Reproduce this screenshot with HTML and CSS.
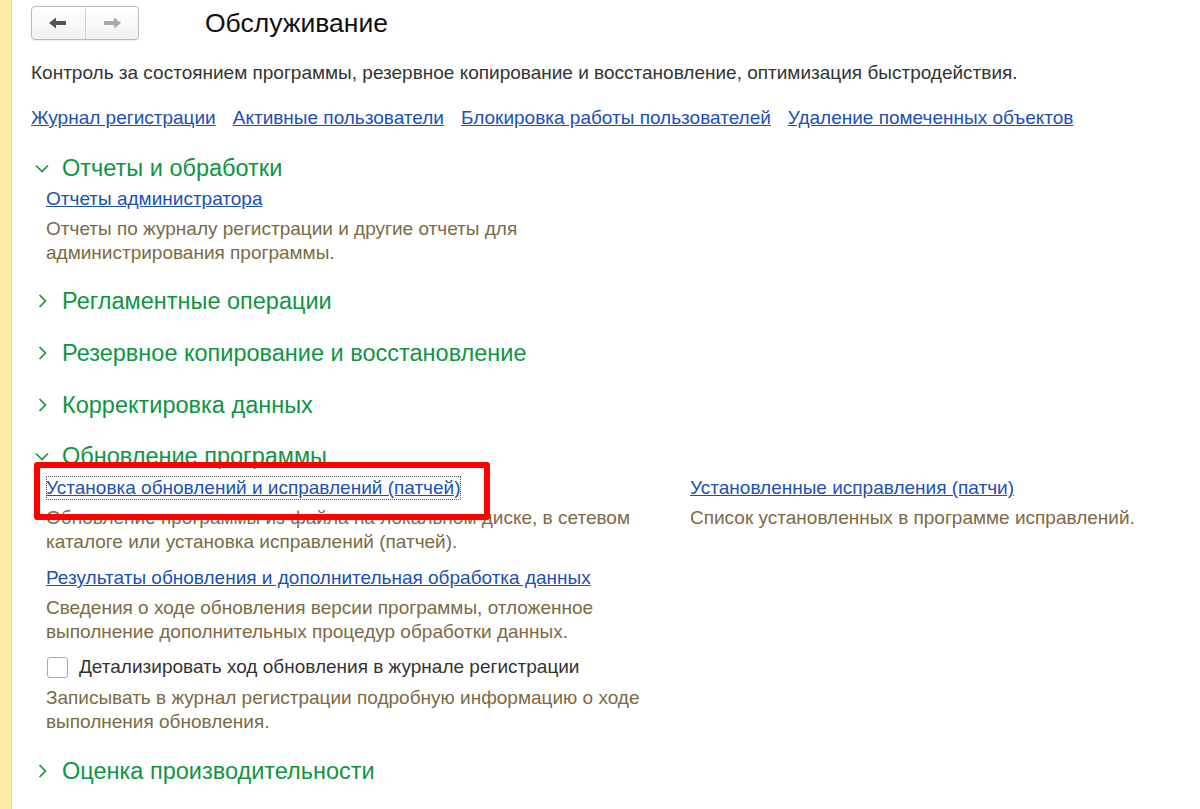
FILE: index.html
```html
<!DOCTYPE html>
<html lang="ru">
<head>
<meta charset="utf-8">
<title>Обслуживание</title>
<link rel="stylesheet" href="styles.css">
</head>
<body>
<div class="strip"></div>
<main class="page">
  <header class="topbar">
    <div class="navbtns">
      <span class="nb nb-back">
        <svg width="18" height="12" viewBox="0 0 18 12"><path d="M0 6 L7 0.5 V4 H17 V8 H7 V11.5 Z" fill="#555"/></svg>
      </span>
      <span class="nb nb-fwd">
        <svg width="18" height="12" viewBox="0 0 18 12"><path d="M18 6 L11 0.5 V4 H1 V8 H11 V11.5 Z" fill="#a9a9a9"/></svg>
      </span>
    </div>
    <h1 class="title">Обслуживание</h1>
  </header>

  <p class="lead">Контроль за состоянием программы, резервное копирование и восстановление, оптимизация быстродействия.</p>

  <nav class="toplinks">
    <a href="#">Журнал регистрации</a>
    <a href="#">Активные пользователи</a>
    <a href="#">Блокировка работы пользователей</a>
    <a href="#">Удаление помеченных объектов</a>
  </nav>

  <section class="group open first">
    <h2 class="ghead"><span class="chev down"><svg width="14" height="9" viewBox="0 0 14 9"><path d="M1 1.5 L7 7.5 L13 1.5" fill="none" stroke="#12963f" stroke-width="1.7"/></svg></span>Отчеты и обработки</h2>
    <div class="gbody">
      <div class="item">
        <a href="#" class="ilink">Отчеты администратора</a>
        <p class="idesc">Отчеты по журналу регистрации и другие отчеты для<br>администрирования программы.</p>
      </div>
    </div>
  </section>

  <section class="group after-open">
    <h2 class="ghead"><span class="chev right"><svg width="9" height="14" viewBox="0 0 9 14"><path d="M1.5 1 L7.5 7 L1.5 13" fill="none" stroke="#12963f" stroke-width="1.7"/></svg></span>Регламентные операции</h2>
  </section>

  <section class="group">
    <h2 class="ghead"><span class="chev right"><svg width="9" height="14" viewBox="0 0 9 14"><path d="M1.5 1 L7.5 7 L1.5 13" fill="none" stroke="#12963f" stroke-width="1.7"/></svg></span>Резервное копирование и восстановление</h2>
  </section>

  <section class="group">
    <h2 class="ghead"><span class="chev right"><svg width="9" height="14" viewBox="0 0 9 14"><path d="M1.5 1 L7.5 7 L1.5 13" fill="none" stroke="#12963f" stroke-width="1.7"/></svg></span>Корректировка данных</h2>
  </section>

  <section class="group open upd">
    <h2 class="ghead"><span class="chev down"><svg width="14" height="9" viewBox="0 0 14 9"><path d="M1 1.5 L7 7.5 L13 1.5" fill="none" stroke="#12963f" stroke-width="1.7"/></svg></span>Обновление программы</h2>
    <div class="gbody cols">
      <div class="col">
        <div class="item">
          <a href="#" class="ilink focused">Установка обновлений и исправлений (патчей)</a>
          <p class="idesc">Обновление программы из файла на локальном диске, в сетевом<br>каталоге или установка исправлений (патчей).</p>
        </div>
        <div class="item">
          <a href="#" class="ilink">Результаты обновления и дополнительная обработка данных</a>
          <p class="idesc">Сведения о ходе обновления версии программы, отложенное<br>выполнение дополнительных процедур обработки данных.</p>
        </div>
        <div class="item">
          <label class="check"><span class="box"></span>Детализировать ход обновления в журнале регистрации</label>
          <p class="idesc">Записывать в журнал регистрации подробную информацию о ходе<br>выполнения обновления.</p>
        </div>
      </div>
      <div class="col">
        <div class="item">
          <a href="#" class="ilink">Установленные исправления (патчи)</a>
          <p class="idesc">Список установленных в программе исправлений.</p>
        </div>
      </div>
    </div>
    <div class="redmark"></div>
  </section>

  <section class="group last">
    <h2 class="ghead"><span class="chev right"><svg width="9" height="14" viewBox="0 0 9 14"><path d="M1.5 1 L7.5 7 L1.5 13" fill="none" stroke="#12963f" stroke-width="1.7"/></svg></span>Оценка производительности</h2>
  </section>
</main>
</body>
</html>
```

FILE: styles.css
```css
html, body {
  margin: 0;
  padding: 0;
  background: #ffffff;
  height: 100%;
}
body {
  font-family: "Liberation Sans", Arial, sans-serif;
  color: #222;
  display: flex;
  overflow: hidden;
}
.strip {
  width: 11px;
  flex: 0 0 11px;
  background: #fbeda5;
  border-right: 1px solid #efdc8a;
}
.page {
  flex: 1;
  padding: 6px 0 0 19px;
}
.topbar {
  display: flex;
  align-items: center;
  height: 34px;
}
.navbtns {
  display: flex;
  width: 106px;
  height: 32px;
  border: 1px solid #b9b9b9;
  border-radius: 4px;
  background: linear-gradient(#ffffff, #f1f1f1);
  box-shadow: 0 1px 1px rgba(0,0,0,0.08);
}
.nb {
  flex: 1;
  display: flex;
  align-items: center;
  justify-content: center;
}
.nb-back {
  border-right: 1px solid #d4d4d4;
}
.title {
  margin: 0 0 0 66px;
  font-weight: normal;
  font-size: 26.5px;
  color: #111;
  line-height: 34px;
}
.lead {
  margin: 21px 0 0;
  font-size: 19px;
  line-height: 24px;
  color: #333;
}
.toplinks {
  display: flex;
  gap: 17px;
  margin-top: 21px;
  font-size: 19px;
  line-height: 24px;
}
a {
  color: #1b50b8;
  text-decoration: underline;
}
.group {
  position: relative;
  margin-top: 22px;
}
.group.first { margin-top: 23px; }
.group.after-open { margin-top: 21px; }
.group.upd { margin-top: 21px; }
.group.last { margin-top: 22px; }
.ghead {
  margin: 0;
  display: flex;
  align-items: center;
  font-weight: normal;
  font-size: 23.5px;
  line-height: 30px;
  color: #0d963f;
}
.chev {
  display: inline-flex;
  width: 31px;
  padding-left: 4px;
  box-sizing: border-box;
}
.chev.right { padding-left: 7px; }
.gbody {
  padding-left: 15px;
  margin-top: 4px;
}
.cols {
  display: grid;
  grid-template-columns: 644px 1fr;
  margin-top: 5px;
}
.item + .item { margin-top: 12px; }
.ilink {
  display: inline-block;
  font-size: 19px;
  line-height: 24px;
}
.focused {
  outline: 1px dotted #555;
  outline-offset: -1px;
}
.idesc {
  margin: 6px 0 0;
  font-size: 19px;
  line-height: 24px;
  color: #7c6a45;
}
.check {
  display: flex;
  align-items: center;
  font-size: 19px;
  line-height: 24px;
  color: #333;
}
.item + .item .check { margin-top: -1px; }
.box {
  width: 19px;
  height: 19px;
  border: 1px solid #a8a8a8;
  border-radius: 3px;
  background: #fff;
  margin: 0 11px 0 1px;
}
.check + .idesc { margin-top: 7px; }
.redmark {
  position: absolute;
  left: 3px;
  top: 21px;
  width: 444px;
  height: 46px;
  border: 6px solid #ff0000;
  border-radius: 3px;
}
```
